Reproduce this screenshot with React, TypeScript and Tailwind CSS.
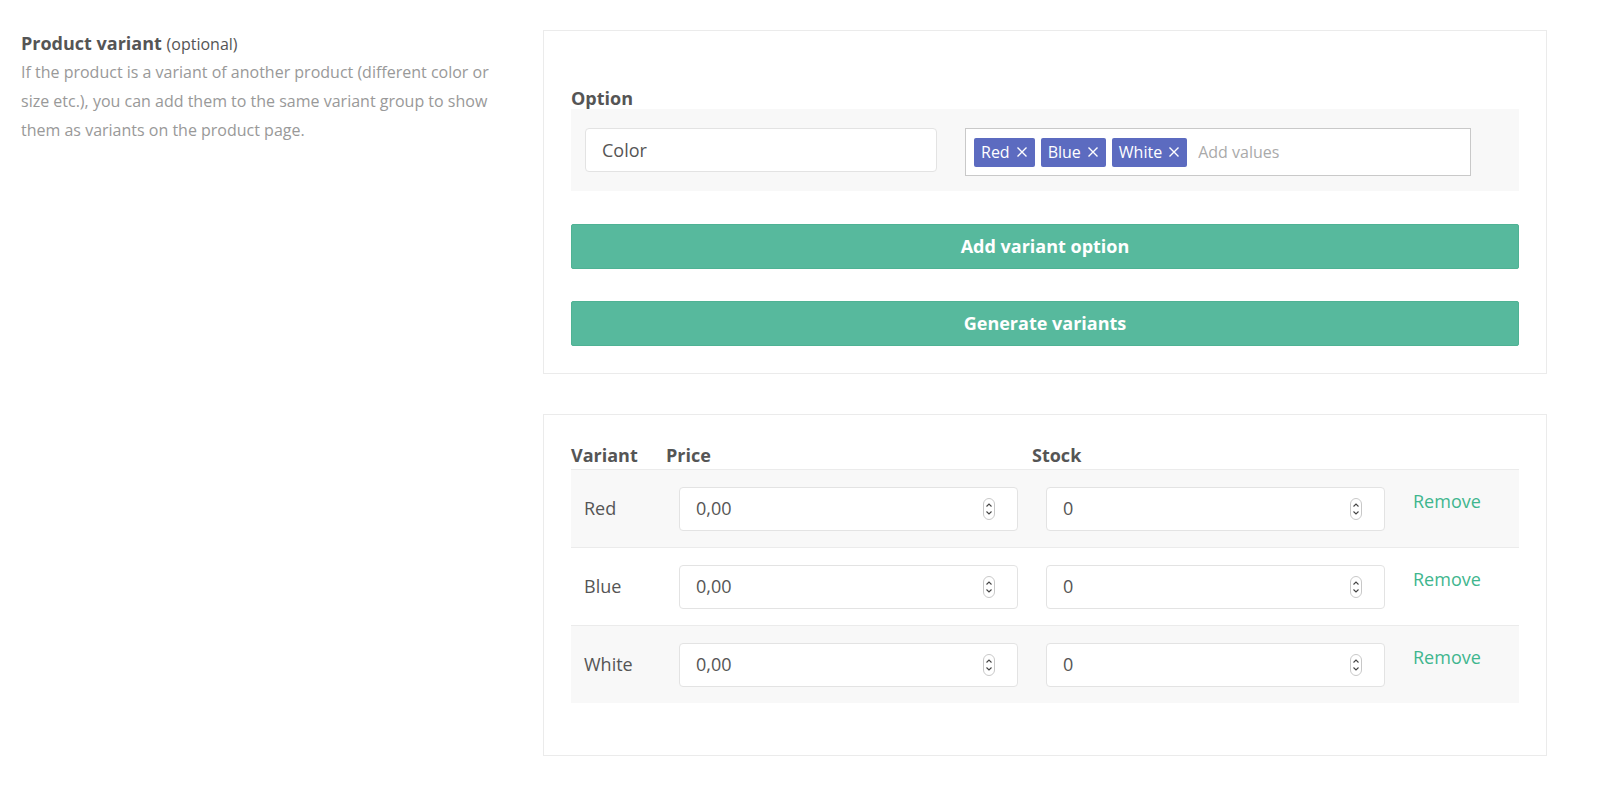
import { useState } from 'react';

const font = { fontFamily: '"Open Sans", "Liberation Sans", sans-serif' };

function Spinner() {
  return (
    <svg width="12" height="22" viewBox="0 0 12 22" className="shrink-0">
      <rect x="0.5" y="0.5" width="11" height="21" rx="5.5" fill="#fff" stroke="#c8c8c8" />
      <path d="M3.5 8.5 L6 6 L8.5 8.5" fill="none" stroke="#444" strokeWidth="1.1" />
      <path d="M3.5 13.5 L6 16 L8.5 13.5" fill="none" stroke="#444" strokeWidth="1.1" />
    </svg>
  );
}

function NumberBox({ value }: { value: string }) {
  return (
    <div className="flex h-[44px] items-center rounded-[4px] border border-[#e3e3e3] bg-white pl-4 pr-[22px]">
      <input
        defaultValue={value}
        className="min-w-0 flex-1 bg-transparent text-[18px] text-[#555] outline-none"
      />
      <Spinner />
    </div>
  );
}

export default function App() {
  const [values, setValues] = useState(['Red', 'Blue', 'White']);
  const rows = ['Red', 'Blue', 'White'];

  return (
    <div className="flex h-screen overflow-hidden bg-white pt-[30px] pl-[21px]" style={font}>
      {/* LEFT DESCRIPTION */}
      <div className="w-[522px] shrink-0 pt-px pr-[40px]">
        <h3 className="text-[18px] leading-[24px] font-bold text-[#555]">
          Product variant <span className="text-[16px] font-normal">(optional)</span>
        </h3>
        <p className="mt-[2px] text-[16px] leading-[29px] text-[#999]">
          If the product is a variant of another product (different color or size etc.), you can add them to the same variant group to show them as variants on the product page.
        </p>
      </div>

      {/* RIGHT CARDS */}
      <div className="flex w-[1004px] shrink-0 flex-col gap-[40px]">
        <div className="border border-[#ebebeb] bg-white px-[27px] pt-[56px] pb-[27px]">
          <p className="text-[18px] leading-[22px] font-bold text-[#555]">Option</p>
          <div className="flex h-[82px] items-start gap-[28px] bg-[#f8f8f8] px-[14px] pt-[19px]">
            <input
              defaultValue="Color"
              className="h-[44px] w-[352px] rounded-[4px] border border-[#e3e3e3] bg-white px-4 text-[18px] text-[#555] outline-none"
            />
            <div className="flex h-[48px] w-[506px] items-center gap-[6px] border border-[#c9c9c9] bg-white px-[8px]">
              {values.map((v) => (
                <span
                  key={v}
                  className="flex h-[29px] items-center gap-[6px] rounded-[2px] bg-[#5c6bc0] px-[7px] text-[16px] text-white"
                >
                  {v}
                  <button onClick={() => setValues(values.filter((x) => x !== v))}>
                    <svg width="12" height="12" viewBox="0 0 12 12" className="block">
                      <path d="M1.5 1.5 L10.5 10.5 M10.5 1.5 L1.5 10.5" stroke="#fff" strokeWidth="1.4" />
                    </svg>
                  </button>
                </span>
              ))}
              <input
                placeholder="Add values"
                className="ml-[5px] min-w-0 flex-1 text-[16px] text-[#555] outline-none placeholder:text-[#aaa]"
              />
            </div>
          </div>
          <button className="mt-[33px] h-[45px] w-full rounded-[2px] border border-[#4fb294] bg-[#57b99d] text-[18px] font-bold text-white">
            Add variant option
          </button>
          <button className="mt-[32px] h-[45px] w-full rounded-[2px] border border-[#4fb294] bg-[#57b99d] text-[18px] font-bold text-white">
            Generate variants
          </button>
        </div>

        <div className="border border-[#ebebeb] bg-white px-[27px] pt-[27px] pb-[52px]">
          <div className="grid h-[27px] grid-cols-[95px_366px_367px_1fr] items-center text-[18px] font-bold text-[#555]">
            <span>Variant</span>
            <span>Price</span>
            <span>Stock</span>
            <span />
          </div>
          {rows.map((r, i) => (
            <div
              key={r}
              className={`grid h-[78px] grid-cols-[95px_366px_367px_1fr] border-t border-[#ebebeb] ${
                i % 2 === 0 ? 'bg-[#f8f8f8]' : 'bg-white'
              }`}
            >
              <span className="flex items-center pl-[13px] text-[18px] text-[#555]">{r}</span>
              <div className="flex items-center pl-[13px] pr-[14px]">
                <div className="w-full">
                  <NumberBox value="0,00" />
                </div>
              </div>
              <div className="flex items-center pl-[14px] pr-[14px]">
                <div className="w-full">
                  <NumberBox value="0" />
                </div>
              </div>
              <div className="pt-[18px] pl-[14px]">
                <a className="cursor-pointer text-[18px] leading-[26px] text-[#3fb68e]">Remove</a>
              </div>
            </div>
          ))}
        </div>
      </div>
    </div>
  );
}
